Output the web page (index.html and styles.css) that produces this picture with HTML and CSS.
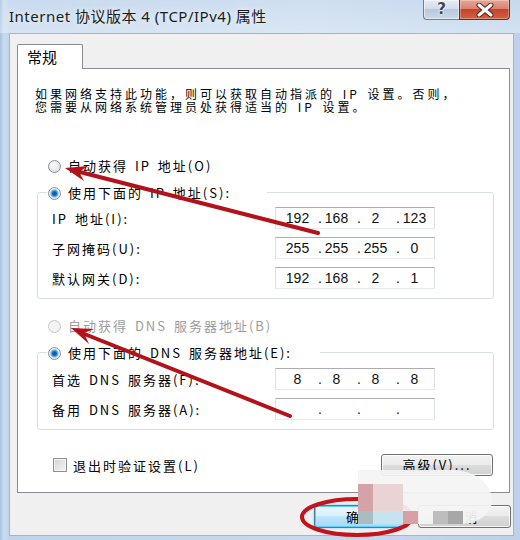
FILE: index.html
```html
<!DOCTYPE html>
<html lang="zh-CN">
<head>
    <meta charset="UTF-8">
    <meta name="viewport" content="width=device-width, initial-scale=1.0">
    <title>Internet 协议版本 4 (TCP/IPv4) 属性</title>
    <link rel="stylesheet" href="styles.css">
</head>
<body>
    <div class="window">
        <div class="titlebar">
            <div class="title">Internet 协议版本 4 (TCP/IPv4) 属性</div>
            <div class="caption">
                <div class="cap-help">?</div>
                <div class="cap-close">
                    <svg width="18" height="14" viewBox="0 0 18 14">
                        <path d="M3 2 L15 12 M15 2 L3 12" stroke="#5a1f16" stroke-width="5" stroke-linecap="round"/>
                        <path d="M3 2 L15 12 M15 2 L3 12" stroke="#ffffff" stroke-width="3" stroke-linecap="round"/>
                    </svg>
                </div>
            </div>
        </div>

        <div class="client">
            <div class="tabs">
                <div class="tab">常规</div>
            </div>

            <div class="panel">
                <p class="desc">如果网络支持此功能，则可以获取自动指派的 IP 设置。否则，<br>您需要从网络系统管理员处获得适当的 IP 设置。</p>

                <div class="radio-row first"><span class="radio"></span>自动获得 IP 地址(O)</div>
                <div class="group">
                    <div class="radio-row legend legend-ip"><span class="radio checked"></span>使用下面的 IP 地址(S):</div>
                    <div class="fields">
                        <div class="label">IP 地址(I):</div>
                        <div class="ip"><span class="oct">192</span><span class="sep">.</span><span class="oct">168</span><span class="sep">.</span><span class="oct">2</span><span class="sep">.</span><span class="oct">123</span></div>
                        <div class="label">子网掩码(U):</div>
                        <div class="ip"><span class="oct">255</span><span class="sep">.</span><span class="oct">255</span><span class="sep">.</span><span class="oct">255</span><span class="sep">.</span><span class="oct">0</span></div>
                        <div class="label">默认网关(D):</div>
                        <div class="ip"><span class="oct">192</span><span class="sep">.</span><span class="oct">168</span><span class="sep">.</span><span class="oct">2</span><span class="sep">.</span><span class="oct">1</span></div>
                    </div>
                </div>

                <div class="radio-row second disabled"><span class="radio"></span>自动获得 DNS 服务器地址(B)</div>
                <div class="group">
                    <div class="radio-row legend legend-dns"><span class="radio checked"></span>使用下面的 DNS 服务器地址(E):</div>
                    <div class="fields dns">
                        <div class="label">首选 DNS 服务器(F):</div>
                        <div class="ip"><span class="oct">8</span><span class="sep">.</span><span class="oct">8</span><span class="sep">.</span><span class="oct">8</span><span class="sep">.</span><span class="oct">8</span></div>
                        <div class="label">备用 DNS 服务器(A):</div>
                        <div class="ip"><span class="oct"></span><span class="sep">.</span><span class="oct"></span><span class="sep">.</span><span class="oct"></span><span class="sep">.</span><span class="oct"></span></div>
                    </div>
                </div>

                <div class="footer">
                    <div class="check-row"><span class="checkbox"></span>退出时验证设置(L)</div>
                    <div class="button advanced">高级(V)...</div>
                </div>
            </div>

            <div class="dialog-buttons">
                <div class="button ok">确定</div>
                <div class="button cancel">取消</div>
            </div>
        </div>

        <!-- red annotations drawn over the dialog -->
        <svg class="marks" width="520" height="540" viewBox="0 0 520 540">
            <g stroke="#b3121a" stroke-width="4" stroke-linecap="round" fill="none">
                <path d="M318 233 L76 171"/>
                <path d="M290 416 L82 333"/>
            </g>
            <g fill="#b3121a">
                <polygon points="65,168 88,166 79,172 84,181"/>
                <polygon points="71,328 94,329 84,333 89,344"/>
            </g>
            <ellipse cx="357" cy="517" rx="55" ry="18" fill="none" stroke="#c3141c" stroke-width="4"/>
        </svg>

        <div class="watermark">
            <span class="px p1"></span>
            <span class="px p2"></span>
            <span class="px p3"></span>
            <span class="px p4"></span>
            <span class="px p5"></span>
            <span class="px p6"></span>
            <span class="px p7"></span>
        </div>
    </div>
</body>
</html>
```

FILE: styles.css
```css
* {
    box-sizing: border-box;
}
body {
    margin: 0;
    font-family: "Noto Sans CJK SC", sans-serif;
    font-size: 13px;
    color: #000;
}
.window {
    position: relative;
    width: 520px;
    height: 540px;
    overflow: hidden;
    display: flex;
    flex-direction: column;
    background: linear-gradient(to right, #a8c2e0, #cbdcf0 4px, #bfd4ec 9px, #c6d9ee 60%, #bcd2ea);
}
.titlebar {
    height: 33px;
    display: flex;
    align-items: flex-start;
    background: linear-gradient(to bottom, rgba(255,255,255,0.15), rgba(255,255,255,0.35));
}
.title {
    flex: 1;
    padding: 7px 0 0 9px;
    font: 15px/18px "Noto Sans", "Noto Sans CJK SC", sans-serif;
    letter-spacing: 0.5px;
    color: #1c1c1c;
    white-space: nowrap;
    text-shadow: 0 0 6px rgba(255, 255, 255, 0.9);
}
.caption {
    display: flex;
    margin-right: 10px;
}
.cap-help {
    width: 36px;
    height: 20px;
    border: 1px solid #6e7f97;
    border-top: none;
    border-right: none;
    border-radius: 0 0 0 4px;
    background: linear-gradient(to bottom, #e4ecf6, #d2dcea 45%, #b9c8dc 50%, #cad8e8);
    box-shadow: inset 0 0 0 1px rgba(255,255,255,0.5);
    text-align: center;
    font: bold 15px/19px "DejaVu Sans", sans-serif;
    color: #3b4656;
    text-shadow: 0 0 2px #fff, 0 0 2px #fff;
}
.cap-close {
    width: 51px;
    height: 20px;
    border: 1px solid #6a2b22;
    border-top: none;
    border-radius: 0 0 4px 0;
    background: linear-gradient(to bottom, #e8a797, #d88470 45%, #c4432b 50%, #d2623f);
    box-shadow: inset 0 0 0 1px rgba(255,255,255,0.3);
    display: flex;
    align-items: center;
    justify-content: center;
}
.client {
    flex: 1;
    margin: 0 6px 4px 9px;
    background: #f0f0f0;
    border: 1px solid #a3b5ca;
    display: flex;
    flex-direction: column;
}
.tabs {
    display: flex;
    margin-top: 10px;
    padding-left: 7px;
}
.tab {
    position: relative;
    z-index: 1;
    width: 66px;
    height: 25px;
    margin-bottom: -1px;
    padding-left: 9px;
    border: 1px solid #898c95;
    border-bottom: none;
    border-radius: 2px 2px 0 0;
    background: #fff;
    font-size: 15px;
    line-height: 23px;
}
.panel {
    height: 425px;
    margin: 0 3px 0 7px;
    padding: 0 15px 0 17px;
    border: 1px solid #898c95;
    background: #fff;
    word-spacing: 2px;
}
.desc {
    margin: 18px 0 0;
    font-size: 12px;
    line-height: 13px;
    letter-spacing: 3px;
    white-space: nowrap;
}
.radio-row {
    display: flex;
    align-items: center;
    height: 16px;
    line-height: 16px;
    letter-spacing: 2px;
    white-space: nowrap;
}
.radio-row.first {
    margin-top: 45px;
    padding-left: 13px;
}
.radio-row.second {
    margin-top: 19px;
    padding-left: 13px;
}
.radio-row.disabled {
    color: #9c9c9c;
}
.radio {
    width: 13px;
    height: 13px;
    margin-right: 7px;
    border: 1px solid #8c8f94;
    border-radius: 50%;
    background: radial-gradient(circle at 45% 40%, #ffffff, #e6e6e6 60%, #cfcfcf);
    flex: none;
}
.radio.checked {
    background: radial-gradient(circle, #0d4c8c 0, #1d6fbf 2px, #6cb8ee 3.5px, #dfe9f3 4.5px, #f2f2f2 6px);
}
.disabled .radio {
    border-color: #c5c7ca;
    background: #f3f3f3;
}
.group {
    margin: 18px 0 0 2px;
    padding: 0 0 9px 14px;
    border: 1px solid #d5dfe5;
    border-radius: 3px;
}
.legend {
    margin: -8px 0 0 -5px;
    padding-left: 1px;
    background: #fff;
}
.legend-ip {
    width: 220px;
}
.legend-dns {
    width: 273px;
}
.fields {
    display: grid;
    grid-template-columns: 223px 160px;
    grid-auto-rows: 22px;
    row-gap: 8px;
    align-items: center;
    margin-top: 6px;
}
.fields.dns {
    margin-top: 7px;
}
.label {
    letter-spacing: 2px;
    white-space: nowrap;
}
.ip {
    display: flex;
    height: 22px;
    padding-left: 2px;
    border: 1px solid #dbdfe6;
    border-top-color: #abadb3;
    border-bottom-color: #e3e9ef;
    font: 14px/20px "Liberation Sans", sans-serif;
    word-spacing: 0;
    color: #111;
}
.oct {
    width: 39px;
    text-align: center;
}
.sep {
    width: 6px;
    margin-right: -6px;
    text-align: center;
}
.footer {
    display: flex;
    justify-content: space-between;
    align-items: center;
    margin-top: 24px;
}
.check-row {
    display: flex;
    align-items: center;
    margin-left: 18px;
    letter-spacing: 2px;
}
.checkbox {
    width: 14px;
    height: 14px;
    margin-right: 6px;
    border: 1px solid #8e8f8f;
    background: linear-gradient(135deg, #d2d2d2, #f6f6f6);
    box-shadow: inset 0 0 0 1px #f4f4f4;
}
.button {
    height: 23px;
    border: 1px solid #707070;
    border-radius: 3px;
    background: linear-gradient(to bottom, #f2f2f2, #ebebeb 50%, #dddddd 50%, #cfcfcf);
    box-shadow: inset 0 0 0 1px rgba(255,255,255,0.8);
    text-align: center;
    line-height: 21px;
    letter-spacing: 2px;
}
.advanced {
    width: 112px;
    height: 22px;
    line-height: 20px;
    margin-right: 1px;
}
.dialog-buttons {
    display: flex;
    justify-content: flex-end;
    gap: 10px;
    margin-top: 12px;
    padding-right: 2px;
}
.ok {
    width: 94px;
    border-color: #3c7fb1;
    background: linear-gradient(to bottom, #eaf6fd, #d9f0fc 50%, #bee6fd 50%, #a7d9f5);
    box-shadow: inset 0 0 0 1px #5fd0f5, 0 0 2px #5fbde8;
}
.cancel {
    width: 93px;
}
.marks {
    position: absolute;
    left: 0;
    top: 0;
    pointer-events: none;
}
.watermark {
    position: absolute;
    left: 358px;
    top: 470px;
    width: 134px;
    height: 54px;
    display: grid;
    grid-template-columns: repeat(9, 15px);
    grid-template-rows: repeat(4, 13.5px);
    border-radius: 0 40px 30px 0 / 0 30px 24px 0;
    background: rgba(244, 244, 244, 0.93);
}
.px {
    display: block;
}
.p1 { grid-column: 1; grid-row: 2 / 4; background: #d3a3a8; }
.p2 { grid-column: 2 / 4; grid-row: 2 / 4; background: #ead3d5; }
.p3 { grid-column: 1; grid-row: 4; background: #a9bcc0; }
.p4 { grid-column: 2 / 4; grid-row: 4; background: #c7e3f0; }
.p5 { grid-column: 4; grid-row: 4; background: #d99fa4; }
.p6 { grid-column: 6 / 8; grid-row: 4; background: #bdbdbd; }
.p7 { grid-column: 7; grid-row: 4; background: #a7a7a7; }
```
